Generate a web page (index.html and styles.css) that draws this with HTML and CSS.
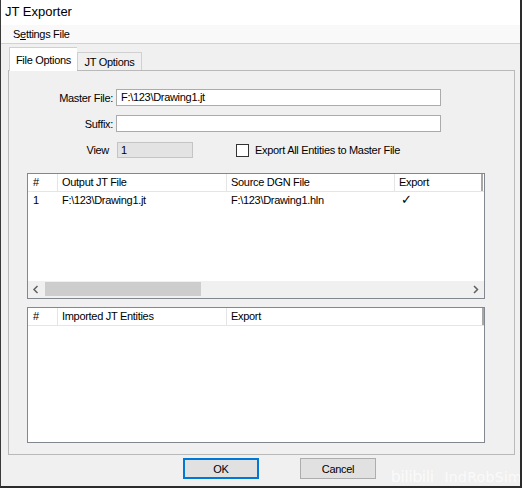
FILE: index.html
```html
<!DOCTYPE html>
<html lang="en">
<head>
    <meta charset="UTF-8">
    <title>JT Exporter</title>
    <link rel="stylesheet" href="styles.css">
</head>
<body>
    <div class="window">
        <div class="titlebar">JT Exporter</div>
        <div class="menubar">
            <span class="menu-item">S<u>e</u>ttings File</span>
        </div>
        <div class="content">
            <div class="tabs">
                <div class="tab active">File Options</div>
                <div class="tab">JT Options</div>
            </div>
            <div class="tab-page">
                <div class="field-row">
                    <label class="field-label">Master File:</label>
                    <div class="field-input">F:\123\Drawing1.jt</div>
                </div>
                <div class="field-row">
                    <label class="field-label">Suffix:</label>
                    <div class="field-input"></div>
                </div>
                <div class="field-row view-row">
                    <label class="field-label view-label">View</label>
                    <div class="view-box">1</div>
                    <span class="checkbox"></span>
                    <span class="check-label">Export All Entities to Master File</span>
                </div>

                <div class="list list-export">
                    <div class="list-header cols-export">
                        <div class="hcell num">#</div>
                        <div class="hcell">Output JT File</div>
                        <div class="hcell">Source DGN File</div>
                        <div class="hcell last">Export</div>
                    </div>
                    <div class="list-body">
                        <div class="list-row cols-export">
                            <div class="cell num">1</div>
                            <div class="cell">F:\123\Drawing1.jt</div>
                            <div class="cell">F:\123\Drawing1.hln</div>
                            <div class="cell tick">&#10003;</div>
                        </div>
                    </div>
                    <div class="hscroll">
                        <div class="sb-arrow">
                            <svg width="17" height="17" viewBox="0 0 17 17"><path d="M9.5 5 L6 8.5 L9.5 12" fill="none" stroke="#606060" stroke-width="1.5"/></svg>
                        </div>
                        <div class="sb-track"><div class="sb-thumb"></div></div>
                        <div class="sb-arrow">
                            <svg width="17" height="17" viewBox="0 0 17 17"><path d="M7 5 L10.5 8.5 L7 12" fill="none" stroke="#606060" stroke-width="1.5"/></svg>
                        </div>
                    </div>
                </div>

                <div class="list list-imported">
                    <div class="list-header cols-imported">
                        <div class="hcell num">#</div>
                        <div class="hcell">Imported JT Entities</div>
                        <div class="hcell last">Export</div>
                    </div>
                    <div class="list-body"></div>
                </div>
            </div>
            <div class="buttons">
                <button class="btn btn-default">OK</button>
                <button class="btn">Cancel</button>
            </div>
        </div>
        <div class="watermark"><span class="wm-logo">bilibili</span> IndRobSim</div>
    </div>
</body>
</html>
```

FILE: styles.css
```css
body {
    margin: 0;
    font-family: "Liberation Sans", Arial, sans-serif;
    font-size: 11px;
    letter-spacing: -0.3px;
    color: #000;
    background: #fff;
}
.window {
    width: 522px;
    height: 488px;
    box-sizing: border-box;
    border-left: 1px solid #3a3a3a;
    border-right: 2px solid #2b2b2b;
    border-bottom: 2px solid #2b2b2b;
    background: #f0f0f0;
    position: relative;
    overflow: hidden;
}
.titlebar {
    height: 25px;
    line-height: 24px;
    padding-left: 4px;
    background: #fff;
    font-size: 13px;
    letter-spacing: 0;
}
.menubar {
    height: 18px;
    line-height: 18px;
    padding-left: 12px;
    background: #f9f9f9;
    border-bottom: 1px solid #d2d2d2;
}
.content {
    padding: 4px 5px 0 7px;
}

/* tab strip */
.tabs {
    display: flex;
    align-items: flex-end;
    height: 22px;
    padding-left: 1px;
}
.tab {
    height: 18px;
    width: 65px;
    box-sizing: border-box;
    border: 1px solid #d0d0d0;
    border-bottom: none;
    background: #f0f0f0;
    text-align: center;
    line-height: 19px;
}
.tab.active {
    height: 24px;
    width: 68px;
    background: #fff;
    border-right: none;
    margin-bottom: -1px;
    line-height: 24px;
    position: relative;
    z-index: 1;
}
.tab-page {
    height: 385px;
    box-sizing: border-box;
    border: 1px solid #b9b9b9;
    padding-top: 18px;
}

/* form fields */
.field-row {
    display: flex;
    align-items: center;
    height: 17px;
    margin-bottom: 9px;
}
.field-label {
    width: 104px;
    margin-right: 3px;
    text-align: right;
}
.field-input {
    width: 325px;
    height: 17px;
    box-sizing: border-box;
    border: 1px solid #ababab;
    background: #fff;
    padding-left: 4px;
    line-height: 15px;
}
.view-row {
    height: 16px;
    margin-top: 10px;
}
.view-label {
    width: 100px;
    margin-right: 8px;
}
.view-box {
    width: 76px;
    height: 16px;
    box-sizing: border-box;
    border: 1px solid #c4c4c4;
    background: #e3e3e3;
    padding-left: 3px;
    line-height: 14px;
}
.checkbox {
    width: 13px;
    height: 13px;
    box-sizing: border-box;
    border: 1px solid #333;
    background: #fff;
    margin-left: 43px;
}
.check-label {
    margin-left: 6px;
}

/* list views */
.list {
    width: 458px;
    box-sizing: border-box;
    border: 1px solid #828790;
    background: #fff;
    margin-left: 18px;
    display: flex;
    flex-direction: column;
}
.list-export {
    height: 126px;
    margin-top: 15px;
}
.list-imported {
    height: 136px;
    margin-top: 8px;
}
.cols-export {
    display: grid;
    grid-template-columns: 30px 169px 168px 88px;
}
.cols-imported {
    display: grid;
    grid-template-columns: 30px 169px 257px;
}
.list-header {
    height: 17px;
    border-bottom: 1px solid #e5e5e5;
}
.hcell {
    border-right: 1px solid #e5e5e5;
    padding-left: 4px;
    line-height: 17px;
    white-space: nowrap;
}
.hcell.last {
    border-right: 2px solid #a8a8a8;
}
.num {
    padding-left: 5px;
}
.list-body {
    flex: 1;
}
.list-row {
    height: 15px;
    line-height: 15px;
    margin-top: 1px;
}
.cell {
    padding-left: 4px;
    white-space: nowrap;
}
.cell.num {
    padding-left: 5px;
}
.cell.tick {
    padding-left: 6px;
    font-family: "DejaVu Sans", sans-serif;
    font-size: 13px;
    line-height: 14px;
}

/* horizontal scrollbar */
.hscroll {
    display: flex;
    height: 17px;
    background: #f0f0f0;
}
.sb-arrow {
    width: 17px;
    height: 17px;
}
.sb-track {
    flex: 1;
    padding: 1px 0;
}
.sb-thumb {
    width: 156px;
    height: 14px;
    background: #cdcdcd;
}

/* dialog buttons */
.buttons {
    display: flex;
    margin-top: 3px;
    padding-left: 175px;
}
.btn {
    width: 76px;
    height: 21px;
    box-sizing: border-box;
    border: 1px solid #adadad;
    background: #e1e1e1;
    font-family: inherit;
    font-size: 11px;
    letter-spacing: -0.3px;
    padding: 0;
    margin: 0 0 0 41px;
}
.btn-default {
    border: 2px solid #0078d7;
    margin-left: 0;
}

.watermark {
    position: absolute;
    right: -2px;
    bottom: 0;
    color: rgba(255, 255, 255, 0.7);
    font-family: "DejaVu Sans", sans-serif;
    font-size: 14px;
    letter-spacing: 0.3px;
    white-space: nowrap;
}
.wm-logo {
    font-size: 16px;
    letter-spacing: -0.5px;
    margin-right: 6px;
}
```
